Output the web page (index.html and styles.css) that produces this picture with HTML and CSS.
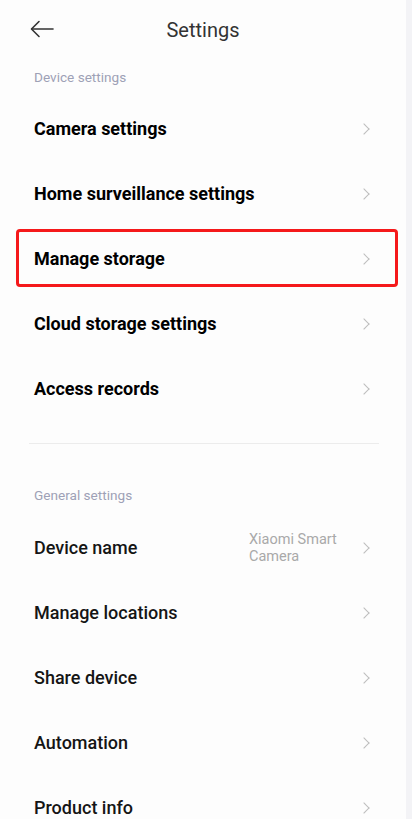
FILE: index.html
```html
<!DOCTYPE html>
<html lang="en">
<head>
  <meta charset="UTF-8" />
  <meta name="viewport" content="width=device-width, initial-scale=1.0" />
  <title>Settings</title>
  <link rel="stylesheet" href="styles.css">
</head>
<body>
  <div class="page">

    <!-- Top bar -->
    <header class="top-bar">
      <button class="back-button" aria-label="Back">
        <svg width="24" height="18" viewBox="0 0 24 18" fill="none" stroke="#333" stroke-width="1.6" stroke-linecap="round" stroke-linejoin="round">
          <path d="M23 9H2"/>
          <path d="M9 1.5L1.5 9L9 16.5"/>
        </svg>
      </button>
      <h1 class="title">Settings</h1>
    </header>

    <!-- Device settings -->
    <section class="group">
      <div class="group-label">Device settings</div>
      <a class="row row-bold" href="#">
        <span class="row-text">Camera settings</span>
        <span class="chevron"></span>
      </a>
      <a class="row row-bold" href="#">
        <span class="row-text">Home surveillance settings</span>
        <span class="chevron"></span>
      </a>
      <a class="row row-bold highlight" href="#">
        <span class="row-text">Manage storage</span>
        <span class="chevron"></span>
      </a>
      <a class="row row-bold" href="#">
        <span class="row-text">Cloud storage settings</span>
        <span class="chevron"></span>
      </a>
      <a class="row row-bold" href="#">
        <span class="row-text">Access records</span>
        <span class="chevron"></span>
      </a>
    </section>

    <div class="divider"></div>

    <!-- General settings -->
    <section class="group">
      <div class="group-label group-label-second">General settings</div>
      <a class="row" href="#">
        <span class="row-text">Device name</span>
        <span class="row-value">Xiaomi Smart<br>Camera</span>
        <span class="chevron"></span>
      </a>
      <a class="row" href="#">
        <span class="row-text">Manage locations</span>
        <span class="chevron"></span>
      </a>
      <a class="row" href="#">
        <span class="row-text">Share device</span>
        <span class="chevron"></span>
      </a>
      <a class="row" href="#">
        <span class="row-text">Automation</span>
        <span class="chevron"></span>
      </a>
      <a class="row" href="#">
        <span class="row-text">Product info</span>
        <span class="chevron"></span>
      </a>
    </section>

  </div>
</body>
</html>
```

FILE: styles.css
```css
/* Base */
body {
  margin: 0;
  font-family: Roboto, "Noto Sans", Arial, sans-serif;
  background: #fdfdfd;
  color: #111;
}
.page {
  width: 406px;
  height: 819px;
  overflow: hidden;
  border-right: 6px solid #f3f3f6; /* faint strip at the right edge */
  background: #fdfdfd;
}

/* Top bar */
.top-bar {
  position: relative;
  height: 60px;
  display: flex;
  align-items: center;
  justify-content: center;
}
.back-button {
  position: absolute;
  left: 30px;
  top: 20px;
  background: none;
  border: none;
  padding: 0;
  cursor: pointer;
  line-height: 0;
}
.title {
  margin: 0;
  font-size: 20px;
  font-weight: 400;
  color: #333;
}

/* Groups */
.group {
  display: flex;
  flex-direction: column;
}
.group-label {
  height: 36px;
  box-sizing: border-box;
  display: flex;
  align-items: center;
  padding: 0 34px 3px;
  font-size: 13.6px;
  color: #9ea1b6;
}
.group-label-second {
  height: 71px;
  align-items: flex-end;
  padding-bottom: 12px;
}

/* Rows */
.row {
  position: relative;
  height: 65px;
  display: flex;
  align-items: center;
  padding: 0 34px;
  text-decoration: none;
  color: #111;
}
.row-text {
  flex: 1;
  font-size: 18px;
  font-weight: 500;
  color: #151515;
}
.row-bold .row-text {
  font-weight: 700;
  color: #000;
}
.row-value {
  width: 100px;
  margin-right: 11px;
  font-size: 14.5px;
  line-height: 17px;
  color: #a9a9a9;
}
.chevron {
  width: 7px;
  height: 7px;
  margin-right: 4px;
  border-top: 1.3px solid #bdbdbd;
  border-right: 1.3px solid #bdbdbd;
  transform: rotate(45deg);
}

/* Red highlight frame drawn over a row */
.highlight::after {
  content: "";
  position: absolute;
  left: 16px;
  right: 8px;
  top: 3px;
  bottom: 4px;
  border: 3px solid #f5191b;
  border-radius: 4px;
}

/* Divider between groups */
.divider {
  height: 1px;
  margin: 22px 27px 0 29px;
  background: #ececec;
}
```
